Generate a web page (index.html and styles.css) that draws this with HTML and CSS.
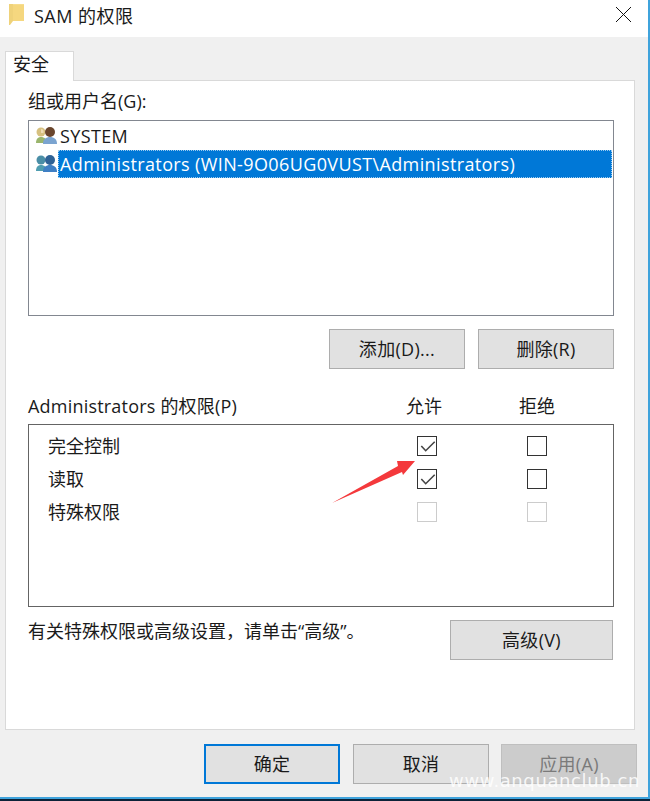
FILE: index.html
```html
<!DOCTYPE html>
<html>
<head>
    <title>SAM 的权限</title>
    <link rel="stylesheet" href="styles.css">
</head>
<body>
    <div class="window">
        <div class="titlebar">
            <svg class="folder-icon" width="15" height="22" viewBox="0 0 15 22">
                <path d="M0 0h15v17H0z" fill="#f7dd8e"/>
                <path d="M0 0h4v17L1 21H0z" fill="#efd27a"/>
                <path d="M4 1h11v16H4z" fill="#f5d77f"/>
            </svg>
            <span class="title">SAM 的权限</span>
            <svg class="close-icon" width="15" height="15" viewBox="0 0 15 15">
                <path d="M0 0l15 15M15 0L0 15" stroke="#111" stroke-width="1" fill="none"/>
            </svg>
        </div>

        <div class="content">
            <div class="tabs"><div class="tab">安全</div></div>

            <div class="panel">
                <div class="label-group">组或用户名(G):</div>
                <div class="listbox">
                    <div class="user-row">
                        <svg class="user-icon" width="22" height="20" viewBox="0 0 22 20">
                            <path d="M1 17c0-4 2-6 5-6s6 2 6 6z" fill="#9ab56c"/>
                            <circle cx="6" cy="6" r="4.500" fill="#d6c07f"/>
                            <path d="M6 3c2 0 3 1 2.500 4H6z" fill="#efdcb4"/>
                            <path d="M8 18c0-5 3-7 7-7s7 2 7 7z" fill="#7ba4d0"/>
                            <circle cx="15" cy="6" r="5" fill="#6a452c"/>
                        </svg>
                        <span class="user-name">SYSTEM</span>
                    </div>
                    <div class="user-row">
                        <svg class="user-icon" width="22" height="20" viewBox="0 0 22 20">
                            <path d="M1 17c0-4 2-6 5-6s6 2 6 6z" fill="#4f9db0"/>
                            <circle cx="6" cy="6" r="4.500" fill="#4a8ea6"/>
                            <path d="M8 18c0-5 3-7 7-7s7 2 7 7z" fill="#3f7fc4"/>
                            <circle cx="15" cy="6" r="5" fill="#2f6296"/>
                        </svg>
                        <span class="user-name selected">Administrators (WIN-9O06UG0VUST\Administrators)</span>
                    </div>
                </div>

                <div class="list-actions">
                    <button class="btn">添加(D)...</button>
                    <button class="btn">删除(R)</button>
                </div>

                <div class="perm-header">
                    <span class="perm-title">Administrators 的权限(P)</span>
                    <span class="perm-col">允许</span>
                    <span class="perm-col">拒绝</span>
                </div>
                <div class="perm-box">
                    <div class="perm-row">
                        <span class="perm-name">完全控制</span>
                        <span class="check"><svg width="18" height="18" viewBox="0 0 18 18"><path d="M3.300 9l4.400 4.700 9-9" stroke="#444" stroke-width="1.600" fill="none"/></svg></span>
                        <span class="check"></span>
                    </div>
                    <div class="perm-row">
                        <span class="perm-name">读取</span>
                        <span class="check"><svg width="18" height="18" viewBox="0 0 18 18"><path d="M3.300 9l4.400 4.700 9-9" stroke="#444" stroke-width="1.600" fill="none"/></svg></span>
                        <span class="check"></span>
                    </div>
                    <div class="perm-row">
                        <span class="perm-name">特殊权限</span>
                        <span class="check disabled"></span>
                        <span class="check disabled"></span>
                    </div>
                </div>

                <div class="advanced">
                    <span class="advanced-text">有关特殊权限或高级设置，请单击“高级”。</span>
                    <button class="btn btn-advanced">高级(V)</button>
                </div>
            </div>

            <div class="footer">
                <button class="btn btn-default">确定</button>
                <button class="btn">取消</button>
                <button class="btn btn-disabled">应用(A)</button>
            </div>
        </div>
    </div>

    <!-- annotation + watermark sit on top of the dialog -->
    <svg class="arrow" width="650" height="801" viewBox="0 0 650 801">
        <path d="M332 503L398 466 397 461 415 461 403 475 402 472z" fill="#f4393c"/>
    </svg>
    <div class="watermark">www.anquanclub.cn</div>
</body>
</html>
```

FILE: styles.css
```css
html, body {
    margin: 0;
    height: 100%;
    overflow: hidden;
}
body {
    font-family: "Open Sans", "Noto Sans CJK SC", sans-serif;
    font-size: 18px;
    color: #1a1a1a;
    background: #0c2238;
    position: relative;
}
.window {
    width: 648px;
    height: 797px;
    border-right: 2px solid #3fa3dc;
    border-bottom: 2px solid #3fa3dc;
    display: flex;
    flex-direction: column;
    background: #f0f0f0;
}
.titlebar {
    height: 37px;
    flex: none;
    background: #fff;
    display: flex;
    align-items: center;
    padding: 0 17px 8px 9px;
    box-sizing: border-box;
}
.folder-icon {
    margin-right: 10px;
}
.title {
    flex: 1;
    letter-spacing: 0.5px;
}
.content {
    flex: 1;
    display: flex;
    flex-direction: column;
    padding: 0 0 0 5px;
}
.tabs {
    height: 43px;
    flex: none;
    display: flex;
    align-items: flex-end;
}
.tab {
    width: 69px;
    height: 30px;
    box-sizing: border-box;
    background: #fff;
    border: 1px solid #d9d9d9;
    border-bottom: none;
    padding-left: 7px;
    line-height: 24px;
    margin-bottom: -1px;
    position: relative;
}
.panel {
    width: 630px;
    height: 650px;
    flex: none;
    box-sizing: border-box;
    background: #fff;
    border: 1px solid #d9d9d9;
    padding: 8px 20px 0 22px;
}
.label-group {
    height: 31px;
    line-height: 24px;
}
.listbox {
    height: 196px;
    box-sizing: border-box;
    border: 1px solid #828790;
    padding-top: 1px;
    margin-bottom: 13px;
}
.user-row {
    height: 28px;
    display: flex;
    align-items: center;
    padding: 0 1px 0 6px;
}
.user-icon {
    margin-right: 1px;
    flex: none;
}
.user-name {
    flex: 1;
    line-height: 28px;
    padding-left: 2px;
    letter-spacing: 0.38px;
    white-space: nowrap;
}
.user-name.selected {
    background: #0078d7;
    color: #fff;
    outline: 1px dotted #9ccbef;
    outline-offset: -1px;
}
.btn {
    width: 136px;
    height: 40px;
    font: inherit;
    letter-spacing: 0.3px;
    color: #1a1a1a;
    background: #e1e1e1;
    border: 1px solid #adadad;
    padding: 0 0 2px;
}
.list-actions {
    display: flex;
    justify-content: flex-end;
    gap: 13px;
    margin-bottom: 22px;
}
.perm-header {
    display: flex;
    height: 33px;
    line-height: 30px;
    white-space: nowrap;
}
.perm-title {
    width: 378px;
    flex: none;
    letter-spacing: 0.2px;
}
.perm-col {
    width: 36px;
    flex: none;
    margin-right: 77px;
}
.perm-col:last-child {
    margin-right: 0;
}
.perm-box {
    height: 183px;
    box-sizing: border-box;
    border: 1px solid #646464;
    padding: 5px 0 0 19px;
    margin-bottom: 13px;
}
.perm-row {
    height: 33px;
    display: flex;
    align-items: flex-start;
}
.perm-name {
    width: 369px;
    flex: none;
    line-height: 33px;
}
.check {
    width: 20px;
    height: 20px;
    flex: none;
    box-sizing: border-box;
    border: 1px solid #333;
    margin: 6px 90px 0 0;
}
.check:last-child {
    margin-right: 0;
}
.check svg {
    display: block;
}
.check.disabled {
    border-color: #ccc;
}
.advanced {
    display: flex;
    justify-content: space-between;
    align-items: flex-start;
    padding-right: 1px;
}
.advanced-text {
    line-height: 22px;
}
.btn-advanced {
    width: 163px;
}
.footer {
    display: flex;
    gap: 13px;
    padding: 14px 0 0 199px;
}
.btn-default {
    border: 2px solid #0078d7;
}
.btn-disabled {
    background: #ccc;
    border-color: #bfbfbf;
    color: #7a7a7a;
    margin-left: -1px;
}
.arrow {
    position: absolute;
    left: 0;
    top: 0;
}
.watermark {
    position: absolute;
    right: 10px;
    bottom: 10px;
    font-family: "DejaVu Sans", sans-serif;
    font-size: 18px;
    letter-spacing: 0.6px;
    color: rgba(255, 255, 255, 0.85);
}
```
